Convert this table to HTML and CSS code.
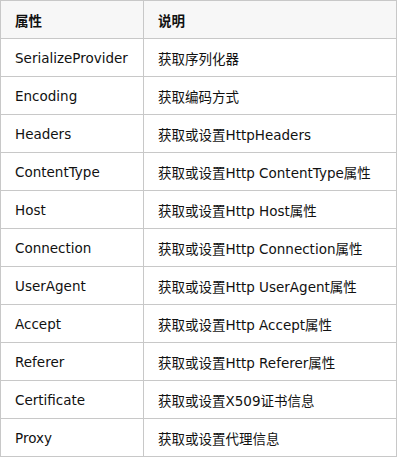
FILE: index.html
```html
<!DOCTYPE html>
<html lang="zh-CN">
<head>
    <meta charset="UTF-8">
    <title>属性说明</title>
    <link rel="stylesheet" href="styles.css">
</head>
<body>
    <table class="prop-table">
        <thead>
            <tr><th class="col-name">属性</th><th>说明</th></tr>
        </thead>
        <tbody>
            <tr><td>SerializeProvider</td><td>获取序列化器</td></tr>
            <tr><td>Encoding</td><td>获取编码方式</td></tr>
            <tr><td>Headers</td><td>获取或设置HttpHeaders</td></tr>
            <tr><td>ContentType</td><td>获取或设置Http ContentType属性</td></tr>
            <tr><td>Host</td><td>获取或设置Http Host属性</td></tr>
            <tr><td>Connection</td><td>获取或设置Http Connection属性</td></tr>
            <tr><td>UserAgent</td><td>获取或设置Http UserAgent属性</td></tr>
            <tr><td>Accept</td><td>获取或设置Http Accept属性</td></tr>
            <tr><td>Referer</td><td>获取或设置Http Referer属性</td></tr>
            <tr><td>Certificate</td><td>获取或设置X509证书信息</td></tr>
            <tr><td>Proxy</td><td>获取或设置代理信息</td></tr>
        </tbody>
    </table>
</body>
</html>
```
FILE: styles.css
```css
body {
    margin: 0;
    background: white;
    font-family: "DejaVu Sans", "Noto Sans CJK SC", sans-serif;
    font-size: 13.5px;
    color: #111;
}

.prop-table {
    border-collapse: collapse;
    width: 397px;
}

.prop-table th,
.prop-table td {
    border: 1px solid #c8c8c8;
    height: 38px;
    padding: 0 0 0 14px;
    text-align: left;
    box-sizing: border-box;
}

.prop-table th {
    background: #f7f7f7;
    font-weight: bold;
}

.col-name {
    width: 143px;
}
```
